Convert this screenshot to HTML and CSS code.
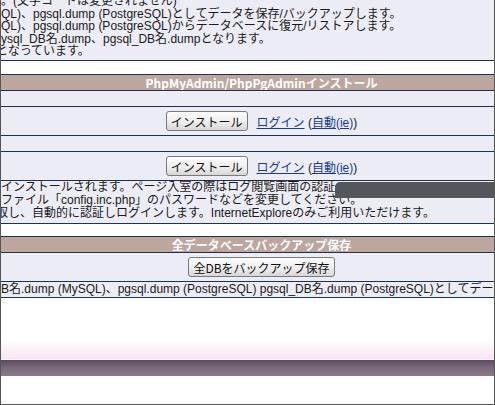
FILE: index.html
```html
<!DOCTYPE html>
<html>
<head>
    <meta charset="utf-8">
    <link rel="stylesheet" href="styles.css">
</head>
<body>
    <div class="frame">
        <div class="row note top-note">
            <div>。(文字コードは変更されません)</div>
            <div>QL)、pgsql.dump (PostgreSQL)としてデータを保存/バックアップします。</div>
            <div>QL)、pgsql.dump (PostgreSQL)からデータベースに復元/リストアします。</div>
            <div>ysql_DB名.dump、pgsql_DB名.dumpとなります。</div>
            <div class="cut">となっています。</div>
        </div>
        <div class="row blank"></div>

        <div class="row heading">PhpMyAdmin/PhpPgAdminインストール</div>
        <div class="row empty"></div>
        <div class="row action">
            <button class="btn">インストール</button>
            <span class="links"><a href="#">ログイン</a> (<a href="#">自動(ie)</a>)</span>
        </div>
        <div class="row empty"></div>
        <div class="row action">
            <button class="btn">インストール</button>
            <span class="links"><a href="#">ログイン</a> (<a href="#">自動(ie)</a>)</span>
        </div>
        <div class="row note mid-note">
            <div>インストールされます。ページ入室の際はログ閲覧画面の認証</div>
            <div>ファイル「config.inc.php」のパスワードなどを変更してください。</div>
            <div class="cut">取し、自動的に認証しログインします。InternetExploreのみご利用いただけます。</div>
            <div class="hint"></div>
        </div>
        <div class="row blank short"></div>

        <div class="row heading">全データベースバックアップ保存</div>
        <div class="row action">
            <button class="btn">全DBをバックアップ保存</button>
        </div>
        <div class="row note one-line">B名.dump (MySQL)、pgsql.dump (PostgreSQL) pgsql_DB名.dump (PostgreSQL)としてデータを保存します。</div>

        <div class="footer">
            <div class="fade"></div>
            <div class="bar"></div>
        </div>
    </div>
</body>
</html>
```

FILE: styles.css
```css
body {
    margin: 0;
    font-family: "Liberation Sans", "Noto Sans CJK JP", sans-serif;
    font-size: 12px;
    color: #1a1a1a;
    background: #fff;
}

.frame {
    width: 493px;
    height: 404px;
    border: 1px solid #555;
    border-top: 0;
    overflow: hidden;
    position: relative;
    display: flex;
    flex-direction: column;
}

.row {
    flex: none;
    border-bottom: 1px solid #1e3250;
    white-space: nowrap;
    overflow: hidden;
}

.note {
    background: #ececf4;
    line-height: 12.5px;
}

.top-note {
    margin-top: -5px;
    height: 65px;
}

.mid-note {
    line-height: 13px;
    height: 42px;
    position: relative;
    overflow: visible;
}

.one-line {
    height: 15px;
    line-height: 15px;
}

.cut {
    text-indent: -5px;
}

.blank {
    height: 13px;
    background: #fff;
}

.blank.short {
    height: 12px;
}

.heading {
    height: 15px;
    line-height: 15px;
    background: #bca69e;
    color: #fff;
    font-family: "Noto Sans CJK JP", sans-serif;
    font-weight: bold;
    text-align: center;
    padding-left: 28px;
}

.empty {
    height: 15px;
    background: #ececf4;
}

.action {
    height: 28px;
    background: #ececf4;
    display: flex;
    align-items: center;
    justify-content: center;
    gap: 9px;
    padding-left: 28px;
}

.btn {
    font-family: "Noto Sans CJK JP", sans-serif;
    font-size: 12px;
    color: #111;
    height: 20px;
    padding: 0 4px;
    border: 1px solid #7a7a7a;
    border-radius: 3px;
    background: linear-gradient(#fdfdfd, #ececec 60%, #d6d6d6);
}

.links a {
    color: #1b3a8c;
}

.hint {
    position: absolute;
    left: 334px;
    top: 1px;
    width: 170px;
    height: 16px;
    background: #53575b;
    border-top-left-radius: 5px;
}

.footer {
    flex: 1;
    padding-top: 42px;
}

.fade {
    height: 19px;
    background: linear-gradient(#fff, #fbeaf7 70%, #f6e6f2);
    border-bottom: 1px solid #fdf4fb;
}

.bar {
    height: 16px;
    background: linear-gradient(#5e4a5f, #7c6a7d 50%, #8b7889);
}
```
